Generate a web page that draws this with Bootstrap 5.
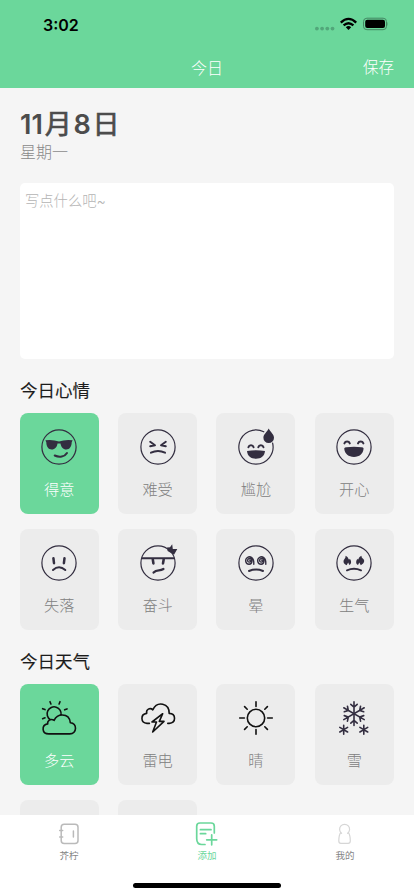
<!DOCTYPE html>
<html lang="zh-CN">
<head>
<meta charset="utf-8">
<meta name="viewport" content="width=device-width, initial-scale=1">
<title>今日</title>
<link href="https://cdn.jsdelivr.net/npm/bootstrap@5.3.0/dist/css/bootstrap.min.css" rel="stylesheet">
<style>
:root{--mint:#6bd79b;--ink:#332e40}
body{font-family:Inter,"Noto Sans CJK SC",sans-serif;background:#f5f5f5;line-height:1}
.screen{height:896px;width:414px}
.top-area{background:var(--mint);height:88px}
.status-row{height:47px;padding:2px 26px 0 43px}
.clock{font-size:16px;font-weight:600;color:#000}
.title-row{height:41px;font-size:16px;font-weight:300;display:grid;grid-template-columns:1fr auto 1fr}
.save{font-size:15.5px;padding-top:1px}
.content{padding:20px 20px 0}
.date{font-size:27px;font-weight:600;color:#4c4c4c;line-height:33px;margin-bottom:1px}
.date .unit{font-weight:400;-webkit-text-stroke:.7px #4c4c4c;margin:0 1.8px}
.week{font-size:16px;font-weight:300;color:#888;line-height:21px}
.note{height:176px;margin-top:20px;border-radius:5px;resize:none;font-size:14.3px;font-weight:300;padding:8px 5px;line-height:20px}
.note::placeholder{color:#b4b4b4}
.section-title{font-size:17.5px;font-weight:400;-webkit-text-stroke:.12px #1c1c1c;color:#1c1c1c;line-height:24px;margin:0}
.tiles{display:grid;grid-template-columns:repeat(4,79px);justify-content:space-between;row-gap:15px;padding-top:10px;margin:0 .2px 0 -.3px}
.tile{height:101px;border-radius:8px;background:#ececec;color:#808080;padding-top:14px;font-size:15.2px;font-weight:300}
.tile.chosen{background:var(--mint);color:#fff}
.tile span{line-height:22px;margin-top:12px}
.tile svg{width:40px;height:40px;overflow:visible;fill:none;stroke:var(--ink);stroke-width:2;stroke-linecap:round;stroke-linejoin:round}
.tile svg.sky{stroke:#111;stroke-width:1.6}
.tile .ring{stroke-width:1.2}
.tile .solid{fill:var(--ink);stroke:none}
.tabs{height:81px;background:#fff;color:#858585;font-size:9.5px}
.tabs .nav-link{color:inherit;padding:6px 0 0;line-height:14px}
.tabs .nav-link.current{color:var(--mint)}
.tabs svg{width:26px;height:26px;fill:none;stroke-linecap:round;stroke-linejoin:round;margin-bottom:2px}
.home-bar{width:148px;height:5px;border-radius:3px;background:#000;margin-bottom:8px}
</style>
<script src="https://cdn.jsdelivr.net/npm/bootstrap@5.3.0/dist/js/bootstrap.bundle.min.js"></script>
</head>
<body>
<div class="screen d-flex flex-column overflow-hidden">
<header class="top-area flex-shrink-0">
  <div class="status-row d-flex justify-content-between align-items-center">
    <span class="clock">3:02</span>
    <svg width="75" height="16" viewBox="0 0 75 16">
      <g fill="#52a77a"><circle cx="3.9" cy="11.6" r="1.9"/><circle cx="9.1" cy="11.6" r="1.9"/><circle cx="14.3" cy="11.6" r="1.9"/><circle cx="19.5" cy="11.6" r="1.9"/></g>
      <g fill="none" stroke="#000" stroke-width="2.3"><path d="M27.8 5.6Q35.5-1.9 43.2 5.6M30.6 8.4Q35.5 4 40.4 8.4"/></g>
      <path d="M32.8 10.2Q35.5 8 38.2 10.2L35.5 12.9Z"/>
      <rect x="50.5" y="1.2" width="23" height="11.5" rx="3.4" fill="none" stroke="#438662"/>
      <rect x="52.2" y="2.8" width="19.8" height="8.3" rx="2"/>
      <path d="M74.6 5q1.7 1.9 0 3.8z" fill="#438662"/>
    </svg>
  </div>
  <nav class="title-row align-items-center text-white px-3">
    <span></span><span>今日</span><span class="save text-end pe-1">保存</span>
  </nav>
</header>

<main class="content flex-grow-1 overflow-hidden">
  <div class="date">11<span class="unit">月</span>8<span class="unit">日</span></div>
  <div class="week">星期一</div>
  <textarea class="note form-control border-0 bg-white d-block" placeholder="写点什么吧~"></textarea>
  <h2 class="section-title mt-3 pt-1">今日心情</h2>
  <div class="tiles">
    <div class="tile chosen d-flex flex-column align-items-center">
      <svg viewBox="-20 -20 40 40"><circle class="ring" r="17.1"/><path class="solid" d="M-13.6-6.8Q-6-7.8 0-5.4Q6-7.8 13.6-6.8L12.7-4.8C12.6-.2 10.5 2.4 7.3 2.4C4 2.4 2-.2 1.5-3.6H-1.5C-2 0-4 2.4-7.3 2.4C-10.5 2.4-12.6-.2-12.7-4.8Z"/><path d="M-4.3 8.5C.5 10.8 5.6 9.9 8 6"/></svg><span>得意</span></div>
    <div class="tile d-flex flex-column align-items-center">
      <svg viewBox="-20 -20 40 40"><circle class="ring" r="17.1"/><path d="M-7.8-5.2L-3-1.8L-7.8-.8M7.8-5.2L3-1.8L7.8-.8M-7 5.7Q0 2.2 7 5.7"/></svg><span>难受</span></div>
    <div class="tile d-flex flex-column align-items-center">
      <svg viewBox="-20 -20 40 40"><path class="ring" d="M7.8-15.2A17.1 17.1 0 1 0 16.6-4"/><path class="solid" d="M12.7-18.4C14.4-14.8 18-12.7 18-9.2A5.3 5.3 0 0 1 7.4-9.2C7.4-12.7 11-14.8 12.7-18.4ZM-9 4.1Q0 2.3 9 4.1C8.5 9.3 5 11.8 0 11.8S-8.5 9.3-9 4.1Z"/><path d="M-7.6.2A2.7 2.7 0 0 1-2.4.2M2.3.2A2.7 2.7 0 0 1 7.5.2"/></svg><span>尴尬</span></div>
    <div class="tile d-flex flex-column align-items-center">
      <svg viewBox="-20 -20 40 40"><circle class="ring" r="17.1"/><path class="solid" d="M-9.8 1.5Q-9.4.2-7.5.2Q0-.8 7.5.2Q9.4.2 9.6 1.5C9 7 5.5 9.9 0 9.9S-9.2 7-9.8 1.5Z"/><path d="M-9.6-3.6A2.9 2.9 0 0 1-4.2-3.6M4-3.6A2.9 2.9 0 0 1 9.4-3.6"/></svg><span>开心</span></div>
    <div class="tile d-flex flex-column align-items-center">
      <svg viewBox="-20 -20 40 40"><circle class="ring" r="17.1"/><path stroke-width="2.5" d="M-5.6-4.8L-5 .2M5.5-4.8L4.9.2"/><path d="M-6 7Q0 1.4 6.3 7"/></svg><span>失落</span></div>
    <div class="tile d-flex flex-column align-items-center">
      <svg viewBox="-20 -20 40 40"><circle class="ring" r="17.1"/><path stroke-linecap="butt" d="M-16.4-4.7H16.4"/><path stroke-width="2.6" d="M-5.2-3.6L-4.6.4M5.7-3.6L5 .4"/><path stroke-width="2.3" d="M-4.4 9.6C-1 5.8 1.5 8.6 5.4 6"/><path class="solid" d="M14.2-18.7L14.8-13.9L19.3-14L16-8.2L9.6-12L9-15.6L12-15.7Z"/></svg><span>奋斗</span></div>
    <div class="tile d-flex flex-column align-items-center">
      <svg viewBox="-20 -20 40 40"><circle class="ring" r="17.1"/><g stroke-width="1.4"><path id="swirl" d="M-2.2 1.2C-1.8-5.6-6-7.2-8.6-5.5C-11.7-3.4-10.3 1.4-6.8 1.2C-3.4.9-3.2-4.2-6.1-4.5C-9-4.7-9-.7-6.6-.9C-5.1-1-5-2.6-6.2-2.7"/><use href="#swirl" x="12"/></g><path d="M-7 8Q0 5.2 7 8"/></svg><span>晕</span></div>
    <div class="tile d-flex flex-column align-items-center">
      <svg viewBox="-20 -20 40 40"><circle class="ring" r="17.1"/><path class="solid" d="M-8.4-7.3C-5.8-6-5.8-4.3-4.9-3.3L-4.1-4.3C-2.4-2-2.4 1-4.7 2L-5.8-.4L-7.4 2.2C-11.2 1-11-2.8-9.3-4.2Q-8.3-5.4-8.4-7.3ZM7.4-7.3C4.8-6 4.8-4.3 4-3.3L3.4-4.3C1.7-2 1.7 1 4 2L5.3-.4L6.8 2.2C11-.1 10.8-2.8 9-4.2Q7.4-5.4 7.4-7.3Z"/><path d="M-7 7.3Q0 4.3 7 7.3"/></svg><span>生气</span></div>
  </div>
  <h2 class="section-title mt-3 pt-1">今日天气</h2>
  <div class="tiles">
    <div class="tile chosen d-flex flex-column align-items-center">
      <svg class="sky" viewBox="-20 -20 40 40"><path d="M-10.2 15.9H10.8C18.2 15.9 18.4 4.9 11.3 4.7C10.8-.6 7.4-3 3.3-3C-.4-3-3.4-1-4.9 2.3C-8.3.2-11.9 2.7-11.3 5.9C-17.8 7-17.4 15.9-10.2 15.9ZM-8.7 1.7A7 7 0 1 1 2-3M-9-16.3L-8.1-14M1-16.3L.1-14M-16.4-9.3L-14-8.4M8-9.1L5.6-8.2M-16.4.7L-14-.2"/></svg><span>多云</span></div>
    <div class="tile d-flex flex-column align-items-center">
      <svg class="sky" viewBox="-20 -20 40 40"><path d="M-8.6 5.4H-11C-17.6 4.8-17.8-3.7-11.3-4.6C-12.2-8.7-8-10.6-5.2-8.2C-.7-17.5 11.3-14.8 11.2-4.6C18.2-4.3 18.4 4.6 11.2 5.4H9.8M4.7-4.3L-6 4H-1.5L-5.3 14L6 3.4H1.3Z"/></svg><span>雷电</span></div>
    <div class="tile d-flex flex-column align-items-center">
      <svg class="sky" viewBox="-20 -20 40 40"><circle r="8.7"/><path d="M0-16.3V-11.6M0 16.3V11.6M-16.3 0H-11.6M16.3 0H11.6M-11.4-11.4L-8.8-8.8M11.4-11.4L8.8-8.8M-11.4 11.4L-8.8 8.8M11.4 11.4L8.8 8.8"/></svg><span>晴</span></div>
    <div class="tile d-flex flex-column align-items-center">
      <svg viewBox="-20 -20 40 40"><g stroke-width="1.6"><g transform="translate(0 -4.3)"><path id="arm" d="M0-11.8V11.8M-3.2-9.4L0-6.6L3.2-9.4M-3.2 9.4L0 6.6L3.2 9.4"/><use href="#arm" transform="rotate(60)"/><use href="#arm" transform="rotate(120)"/></g><path d="M-10.3 7.2V16.2M-14.2 9.4L-6.4 14M-14.2 14L-6.4 9.4M9.8 7.2V16.2M5.9 9.4L13.7 14M5.9 14L13.7 9.4"/></g></svg><span>雪</span></div>
    <div class="tile"></div>
    <div class="tile"></div>
  </div>
</main>

<footer class="tabs flex-shrink-0 d-flex flex-column justify-content-between align-items-center">
  <nav class="nav nav-justified w-100">
    <a class="nav-link d-flex flex-column align-items-center" href="#"><svg viewBox="0 0 26 26" stroke="#bababa" stroke-width="1.5"><rect x="5.2" y="3.2" width="16.8" height="19.2" rx="3"/><path d="M3.7 9.4H6.7M3.7 16.1H6.7M17.4 10V16"/></svg>芥柠</a>
    <a class="nav-link current d-flex flex-column align-items-center" href="#"><svg viewBox="0 0 26 26" stroke="#6bd79b" stroke-width="1.7"><path d="M20.3 12V5.2Q20.3 2 17.1 2H5.9Q2.7 2 2.7 5.2V17.5Q2.7 23.5 7.7 23.5H11M6.4 8.7H17M6.4 12.7H11.7M17.7 13.8V23.8M12.7 18.8H22.7"/></svg>添加</a>
    <a class="nav-link d-flex flex-column align-items-center" href="#"><svg viewBox="0 0 26 26" stroke="#d6d6d6" stroke-width="1.2"><path d="M9.6 12.3A5 5 0 1 1 15.6 12.3M8.7 11.7Q6.8 14.2 6.8 20Q6.8 22.4 8.9 22.4H16.1Q18.3 22.4 18.3 20Q18.3 14.2 16.4 11.7"/></svg>我的</a>
  </nav>
  <div class="home-bar"></div>
</footer>
</div>
</body>
</html>
